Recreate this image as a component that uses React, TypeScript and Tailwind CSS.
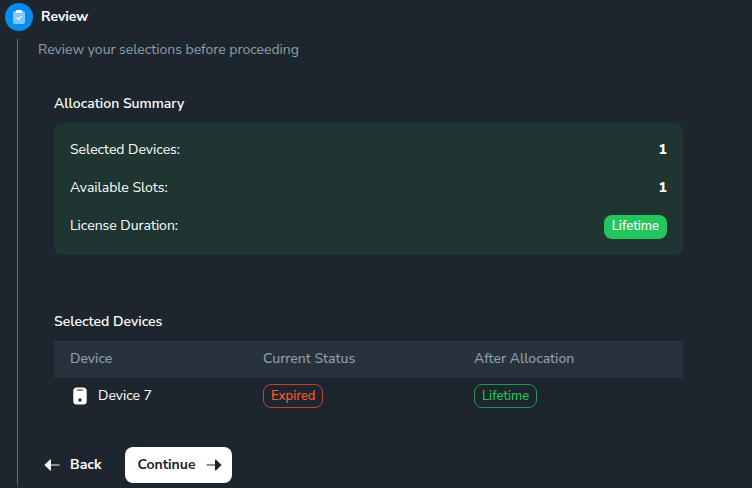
interface SummaryRow {
  label: string;
  value: string;
}

interface Device {
  name: string;
  status: string;
  after: string;
}

const summary: SummaryRow[] = [
  { label: 'Selected Devices:', value: '1' },
  { label: 'Available Slots:', value: '1' },
];

const devices: Device[] = [{ name: 'Device 7', status: 'Expired', after: 'Lifetime' }];

const ClipboardIcon = () => (
  <svg viewBox="0 0 24 24" className="size-4" aria-hidden="true">
    <rect x="3" y="3" width="18" height="19.5" rx="3" fill="#fff" fillOpacity="0.5" />
    <rect x="7.5" y="1.5" width="9" height="4.5" rx="1.5" fill="#fff" />
    <path d="M9 13.5l2.2 2 4.3-4" fill="none" stroke="#fff" strokeWidth="1.8" strokeLinecap="round" strokeLinejoin="round" />
  </svg>
);

const DeviceIcon = () => (
  <svg viewBox="0 0 20 20" className="size-5" aria-hidden="true">
    <rect x="3.3" y="1.5" width="13.4" height="17" rx="3.5" fill="#fff" />
    <path d="M7.5 4h5" stroke="#1d252e" strokeWidth="1.2" strokeLinecap="round" />
    <circle cx="10" cy="14" r="1.7" fill="#1d252e" />
  </svg>
);

const ArrowIcon = ({ left = false }: { left?: boolean }) => (
  <svg viewBox="0 0 16 12" className={left ? 'h-3 w-4 rotate-180' : 'h-3 w-4'} aria-hidden="true">
    <path d="M1 6h9" stroke="currentColor" strokeOpacity="0.65" strokeWidth="1.6" strokeLinecap="round" />
    <path d="M9 1v10c0 .5.5.7.9.4l5.2-4.9a.7.7 0 0 0 0-1L9.900.600c-.4-.3-.9-.1-.9.4z" fill="currentColor" />
  </svg>
);

export default function App() {
  return (
    <main className="flex min-h-screen flex-col bg-[#1d252e] pl-[5px] pt-[3px] font-['Nunito_Sans','Noto_Sans',sans-serif] text-sm text-white">
      <header className="flex items-center gap-2">
        <span className="flex size-7 items-center justify-center rounded-full bg-[#078dee]">
          <ClipboardIcon />
        </span>
        <h1 className="font-bold">Review</h1>
      </header>

      <section className="ml-3 mt-2 border-l border-[#637381] pl-5">
        <p className="pt-px text-[#919eab]">Review your selections before proceeding</p>

        <div className="ml-4 mr-[69px] pt-8">
          <h2 className="mt-0.5 font-semibold">Allocation Summary</h2>
          <dl className="mt-[9px] flex flex-col gap-4 rounded-lg bg-[#1e3532] p-4 leading-[22px]">
            {summary.map((row) => (
              <div key={row.label} className="flex justify-between">
                <dt>{row.label}</dt>
                <dd className="font-extrabold">{row.value}</dd>
              </div>
            ))}
            <div className="flex justify-between">
              <dt>License Duration:</dt>
              <dd className="h-6 rounded-lg bg-[#22c55e] px-2 text-[13px] font-medium">Lifetime</dd>
            </div>
          </dl>

          <h2 className="mb-[9px] mt-[57px] font-semibold">Selected Devices</h2>
          <table className="w-full table-fixed text-left">
            <thead className="bg-[#28323d] text-[#919eab]">
              <tr className="h-[37px]">
                <th className="w-[193px] pb-0.5 pl-4 font-medium">Device</th>
                <th className="w-[211px] pb-0.5 pl-4 font-medium">Current Status</th>
                <th className="pb-0.5 pl-4 font-medium">After Allocation</th>
              </tr>
            </thead>
            <tbody>
              {devices.map((device) => (
                <tr key={device.name} className="h-9">
                  <td className="pl-4">
                    <div className="flex items-center gap-2">
                      <DeviceIcon />
                      {device.name}
                    </div>
                  </td>
                  <td className="pl-4">
                    <span className="inline-flex h-6 items-center rounded-lg border border-[#c4432d] px-[7px] text-[13px] font-medium text-[#ff5630]">
                      {device.status}
                    </span>
                  </td>
                  <td className="pl-4">
                    <span className="inline-flex h-6 items-center rounded-lg border border-[#20984f] px-[7px] text-[13px] font-medium text-[#22c55e]">
                      {device.after}
                    </span>
                  </td>
                </tr>
              ))}
            </tbody>
          </table>
        </div>

        <div className="mt-[33px] flex items-center gap-2">
          <button type="button" className="flex h-9 items-center gap-2.5 rounded-lg px-1.5 pr-4 font-bold">
            <ArrowIcon left />
            Back
          </button>
          <button type="button" className="flex h-9 items-center gap-2.5 rounded-lg bg-white px-3 pr-2.5 font-bold text-[#1c252e]">
            Continue
            <ArrowIcon />
          </button>
        </div>
      </section>

      {/* connector to the next step */}
      <div className="ml-3 flex-1 border-l border-[#3a444e]" />
    </main>
  );
}
